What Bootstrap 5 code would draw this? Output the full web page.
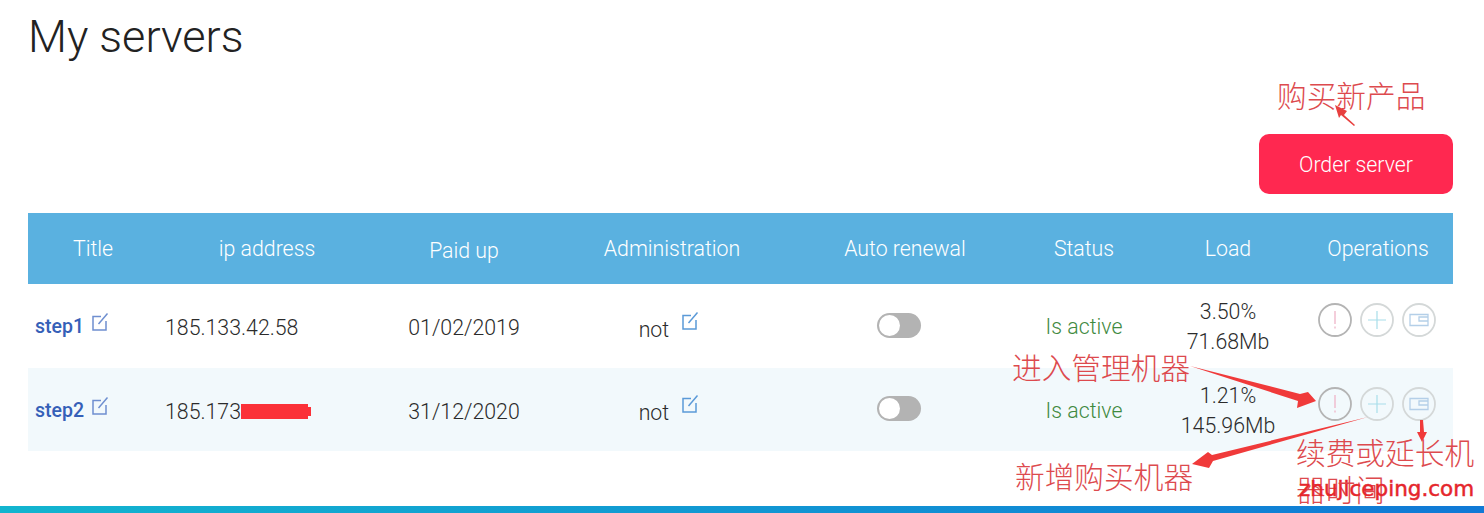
<!DOCTYPE html>
<html lang="en">
<head>
  <meta charset="UTF-8" />
  <meta name="viewport" content="width=device-width, initial-scale=1.0"/>
  <title>My servers</title>
  <link href="https://cdn.jsdelivr.net/npm/bootstrap@5.3.0/dist/css/bootstrap.min.css" rel="stylesheet"/>
  <style>
    html, body { height: 513px; overflow: hidden; }
    body {
      position: relative;
      font-family: Roboto, "Liberation Sans", sans-serif;
      font-weight: 300;
      font-size: 21px;
      color: #2b2b2b;
      background: #fff;
    }
    .page-wrap { padding: 0 31px 0 28px; }
    .page-title {
      font-weight: 300;
      font-size: 45px;
      line-height: 54px;
      margin: 10px 0 0 0;
      color: #222;
    }
    .order-row { margin-top: 70px; margin-bottom: 19px; }
    .order-btn {
      width: 194px;
      height: 60px;
      border: 0;
      border-radius: 10px;
      background: #ff2850;
      color: #fff;
      font-size: 21.300px;
      font-weight: 300;
      padding-top: 8px;
    }
    .order-btn:hover { background: #ff2850; color: #fff; }
    .srv-table { width: 1425px; margin: 0; table-layout: fixed; border-collapse: collapse; }
    .srv-table th {
      background: #5ab1e0;
      color: #fff;
      font-weight: 300;
      font-size: 21.300px;
      height: 71px;
      padding: 0;
      text-align: center;
      vertical-align: middle;
      border: 0;
    }
    .srv-table th.paid-head { padding-top: 4px; }
    .srv-table th.ops-head { padding-right: 3px; }
    .srv-table td {
      padding: 4px 0 0;
      height: 84px;
      text-align: center;
      vertical-align: middle;
      border: 0;
      font-size: 21.300px;
      background: transparent;
      color: #2b2b2b;
      font-weight: 300;
    }
    .srv-table tr.alt-row td { background: #f2f9fc; height: 83px; }
    .srv-table td.name-cell { text-align: left; padding: 0 0 0 7px; }
    .srv-table td.ip-cell { text-align: left; padding-left: 7px; }
    .srv-table td.admin-cell { padding-right: 5px; }
    .srv-table td.active-txt { color: #3f8a3f; padding-top: 2px; }
    .srv-table td.load-cell { line-height: 30px; padding-top: 2px; }
    .srv-table td.toggle-cell { padding: 0 12px 4px 0; }
    .srv-table td.ops-cell { padding: 0 6px 12px 0; }
    .step-link { color: #3560b8; font-weight: 500; font-size: 19.500px; text-decoration: none; }
    .edit-ic { width: 19px; height: 20px; vertical-align: 1px; margin-left: 2px; }
    .edit-ic.edit-hi { vertical-align: 6px; margin-left: 7px; }
    .redact {
      display: inline-block;
      position: relative;
      width: 67px;
      height: 15px;
      background: #fb3138;
      vertical-align: 0;
    }
    .redact::after {
      content: "";
      position: absolute;
      left: 67px;
      top: 3px;
      width: 3px;
      height: 9px;
      background: #fb3138;
    }
    .op-ic { width: 34px; height: 34px; }
    .toggle-track {
      display: inline-block;
      width: 44px;
      height: 25px;
      border-radius: 13px;
      background: #b3b3b3;
      position: relative;
      vertical-align: middle;
    }
    .toggle-track::after {
      content: "";
      position: absolute;
      left: 2px;
      top: 2px;
      width: 21px;
      height: 21px;
      border-radius: 50%;
      background: #fff;
    }
    .foot-bar {
      position: absolute;
      left: 0; right: 0; bottom: 0;
      height: 7px;
      background: linear-gradient(90deg, #12b5cf, #1079d6);
    }
    /* handwritten notes on top of the screenshot */
    .note {
      position: absolute;
      font-family: "Noto Sans CJK SC", sans-serif;
      font-weight: 300;
      font-size: 29.700px;
      line-height: 36px;
      color: #dd4a4e;
      white-space: nowrap;
    }
    .note-1 { left: 1277px; top: 77px; }
    .note-2 { left: 1012px; top: 349px; }
    .note-3 { left: 1015px; top: 458px; }
    .note-4 { left: 1296px; top: 434px; }
    .note-5 { left: 1296px; top: 471px; }
    .site-mark {
      position: absolute;
      left: 1299px; top: 475px;
      font-family: "DejaVu Sans", sans-serif;
      font-size: 21.500px;
      font-weight: 400;
      -webkit-text-stroke: 0.5px #e5262c;
      line-height: 28px;
      color: #e5262c;
      white-space: nowrap;
    }
    .arrows { position: absolute; left: 0; top: 0; width: 1484px; height: 513px; pointer-events: none; }
  </style>
</head>
<body>

<div class="page-wrap">
  <h1 class="page-title">My servers</h1>

  <div class="order-row d-flex justify-content-end">
    <button type="button" class="btn order-btn">Order server</button>
  </div>

  <table class="table srv-table">
    <colgroup>
      <col style="width:130px"><col style="width:218px"><col style="width:176px"><col style="width:240px">
      <col style="width:226px"><col style="width:132px"><col style="width:156px"><col style="width:147px">
    </colgroup>
    <thead>
      <tr>
        <th>Title</th>
        <th>ip address</th>
        <th class="paid-head">Paid up</th>
        <th>Administration</th>
        <th>Auto renewal</th>
        <th>Status</th>
        <th>Load</th>
        <th class="ops-head">Operations</th>
      </tr>
    </thead>
    <tbody>
      <tr>
        <td class="name-cell"><a class="step-link" href="#">step1</a> <svg class="edit-ic" viewBox="0 0 19 20" fill="none" stroke="#6f8fd0" stroke-width="1.5"><path d="M10 4.500H2V18H15V9"/><path d="M7.500 12L16.500 1.500"/></svg></td>
        <td class="ip-cell">185.133.42.58</td>
        <td>01/02/2019</td>
        <td class="admin-cell">not <svg class="edit-ic edit-hi" viewBox="0 0 19 20" fill="none" stroke="#5b9ad8" stroke-width="1.500"><path d="M10 4.500H2V18H15V9"/><path d="M7.500 12L16.500 1.500"/></svg></td>
        <td class="toggle-cell"><span class="toggle-track"></span></td>
        <td class="active-txt">Is active</td>
        <td class="load-cell">3.50%<br>71.68Mb</td>
        <td class="ops-cell">
          <div class="d-flex justify-content-center gap-2">
            <svg class="op-ic" viewBox="0 0 34 34" fill="none"><circle cx="17" cy="17" r="16" stroke="#b4b4b4" stroke-width="1.800"/><path d="M17 8V21M17 23.500V25.500" stroke="#eeb4c8" stroke-width="1.300"/></svg>
            <svg class="op-ic" viewBox="0 0 34 34" fill="none"><circle cx="17" cy="17" r="16" stroke="#d4d8d8" stroke-width="1.800"/><path d="M17 8V26M8 17H26" stroke="#a8deea" stroke-width="1.200"/></svg>
            <svg class="op-ic" viewBox="0 0 34 34" fill="none"><circle cx="17" cy="17" r="16" stroke="#d4d8d8" stroke-width="1.800"/><path d="M8 11.500H26V22.500H8ZM17 14H26V18H17Z" stroke="#b4cfe8" stroke-width="1.300"/></svg>
          </div>
        </td>
      </tr>
      <tr class="alt-row">
        <td class="name-cell"><a class="step-link" href="#">step2</a> <svg class="edit-ic" viewBox="0 0 19 20" fill="none" stroke="#6f8fd0" stroke-width="1.5"><path d="M10 4.500H2V18H15V9"/><path d="M7.500 12L16.500 1.500"/></svg></td>
        <td class="ip-cell">185.173<span class="redact"></span></td>
        <td>31/12/2020</td>
        <td class="admin-cell">not <svg class="edit-ic edit-hi" viewBox="0 0 19 20" fill="none" stroke="#5b9ad8" stroke-width="1.500"><path d="M10 4.500H2V18H15V9"/><path d="M7.500 12L16.500 1.500"/></svg></td>
        <td class="toggle-cell"><span class="toggle-track"></span></td>
        <td class="active-txt">Is active</td>
        <td class="load-cell">1.21%<br>145.96Mb</td>
        <td class="ops-cell">
          <div class="d-flex justify-content-center gap-2">
            <svg class="op-ic" viewBox="0 0 34 34" fill="none"><circle cx="17" cy="17" r="16" stroke="#b4b4b4" stroke-width="1.800"/><path d="M17 8V21M17 23.500V25.500" stroke="#eeb4c8" stroke-width="1.300"/></svg>
            <svg class="op-ic" viewBox="0 0 34 34" fill="none"><circle cx="17" cy="17" r="16" stroke="#d4d8d8" stroke-width="1.800"/><path d="M17 8V26M8 17H26" stroke="#a8deea" stroke-width="1.200"/></svg>
            <svg class="op-ic" viewBox="0 0 34 34" fill="none"><circle cx="17" cy="17" r="16" stroke="#d4d8d8" stroke-width="1.800"/><path d="M8 11.500H26V22.500H8ZM17 14H26V18H17Z" stroke="#b4cfe8" stroke-width="1.300"/></svg>
          </div>
        </td>
      </tr>
    </tbody>
  </table>
</div>

<div class="foot-bar"></div>

<!-- annotations -->
<svg class="arrows" viewBox="0 0 1484 513">
  <path d="M1355 125L1344 115L1347 111L1335 105L1339 118L1341 115L1354 126Z" fill="#e8403f"/>
  <path d="M1190 366L1300 394L1308 392L1316 401L1297 408L1298 401Z" fill="#f03a3a"/>
  <path d="M1368 417L1212 455L1208 452L1192 464L1209 468L1213 461Z" fill="#f03a3a"/>
  <path d="M1420 420H1423L1424 432L1427 432L1422 442L1417 432L1420 432Z" fill="#f03a3a"/>
</svg>
<div class="note note-1">购买新产品</div>
<div class="note note-2">进入管理机器</div>
<div class="note note-3">新增购买机器</div>
<div class="note note-4">续费或延长机</div>
<div class="note note-5">器时间</div>
<div class="site-mark">zhujiceping.com</div>

<script src="https://cdn.jsdelivr.net/npm/bootstrap@5.3.0/dist/js/bootstrap.bundle.min.js"></script>
</body>
</html>
